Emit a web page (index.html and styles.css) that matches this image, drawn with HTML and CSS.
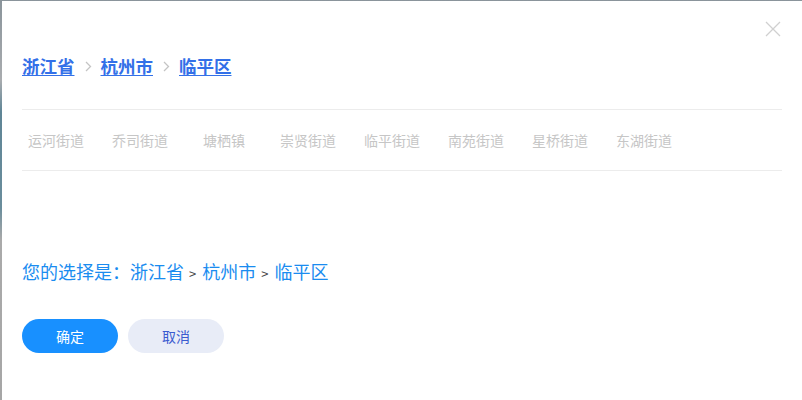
FILE: index.html
```html
<!DOCTYPE html>
<html lang="zh-CN">
<head>
    <meta charset="UTF-8">
    <meta name="viewport" content="width=device-width, initial-scale=1.0">
    <title>选择地区</title>
    <link rel="stylesheet" href="styles.css">
</head>
<body>
    <div class="modal">
        <span class="close" aria-label="关闭">
            <svg width="16" height="16" viewBox="0 0 16 16"><path d="M1 1L15 15M15 1L1 15" stroke="#d0d0d0" stroke-width="1.3" fill="none"/></svg>
        </span>

        <div class="crumbs">
            <a href="#">浙江省</a>
            <span class="sep"><svg width="7" height="11" viewBox="0 0 7 11"><path d="M1 1L5.5 5.5L1 10" stroke="#c4c4c4" stroke-width="1.3" fill="none"/></svg></span>
            <a href="#">杭州市</a>
            <span class="sep"><svg width="7" height="11" viewBox="0 0 7 11"><path d="M1 1L5.5 5.5L1 10" stroke="#c4c4c4" stroke-width="1.3" fill="none"/></svg></span>
            <a href="#">临平区</a>
        </div>

        <ul class="areas">
            <li>运河街道</li>
            <li>乔司街道</li>
            <li>塘栖镇</li>
            <li>崇贤街道</li>
            <li>临平街道</li>
            <li>南苑街道</li>
            <li>星桥街道</li>
            <li>东湖街道</li>
        </ul>

        <p class="result">您的选择是：浙江省<span class="gt">&gt;</span>杭州市<span class="gt">&gt;</span>临平区</p>

        <div class="actions">
            <button class="btn primary">确定</button>
            <button class="btn cancel">取消</button>
        </div>
    </div>
</body>
</html>
```

FILE: styles.css
```css
body {
    font-family: "Noto Sans CJK SC", "Liberation Sans", sans-serif;
    margin: 0;
    padding: 1px 0 0 2px;
    height: 400px;
    box-sizing: border-box;
    overflow: hidden;
    background: linear-gradient(to bottom, #8a949b 0, #a9acaf 20%, #5f8596 28%, #6a8d9c 52%, #aaaaaa 60%, #a6a6a6 100%);
}
.modal {
    position: relative;
    background-color: #FFFFFF;
    height: 399px;
    padding: 52px 20px 0;
    box-sizing: border-box;
}
.close {
    position: absolute;
    top: 20px;
    right: 21px;
    width: 16px;
    height: 16px;
}
.close svg {
    display: block;
}
.crumbs {
    display: flex;
    align-items: center;
    height: 26px;
    line-height: 26px;
}
.crumbs a {
    color: #3370e8;
    font-size: 17.5px;
    font-weight: bold;
    text-decoration: underline;
    text-underline-offset: 2px;
}
.sep {
    display: flex;
    margin: 0 9px 0 10px;
}
.areas {
    list-style: none;
    margin: 30px 0 0;
    padding: 0;
    height: 60px;
    border-top: 1px solid #ececec;
    border-bottom: 1px solid #ececec;
    display: flex;
    align-items: center;
}
.areas li {
    width: 68px;
    margin-right: 16px;
    text-align: center;
    font-size: 14px;
    color: #c6c6c6;
}
.result {
    margin: 88px 0 0;
    font-size: 18px;
    line-height: 24px;
    color: #1a8cf0;
}
.gt {
    color: #444;
    font-size: 13px;
    margin: 0 6px 0 5px;
}
.actions {
    display: flex;
    gap: 10px;
    margin-top: 33px;
}
.btn {
    width: 96px;
    height: 34px;
    border: none;
    border-radius: 17px;
    font-family: inherit;
    font-size: 14px;
    cursor: pointer;
}
.primary {
    background-color: #1890FF;
    color: #FFF;
}
.cancel {
    background-color: #e8ecf7;
    color: #3a5bd0;
}
```
